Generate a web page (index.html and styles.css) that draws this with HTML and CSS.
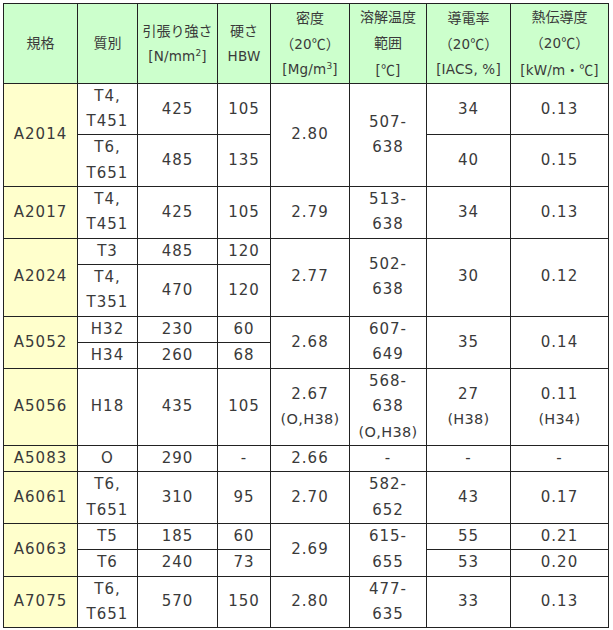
FILE: index.html
```html
<!DOCTYPE html>
<html lang="ja">
<head>
<meta charset="utf-8">
<title>アルミニウム合金の特性</title>
<link rel="stylesheet" href="styles.css">
</head>
<body>
<table class="spec">
  <colgroup>
    <col class="c1"><col class="c2"><col class="c3"><col class="c4">
    <col class="c5"><col class="c6"><col class="c7"><col class="c8">
  </colgroup>
  <thead>
    <tr>
      <th><span class="jp">規格</span></th>
      <th><span class="jp">質別</span></th>
      <th><span class="jp">引張り強さ</span><br>[N/mm<sup>2</sup>]</th>
      <th><span class="jp">硬さ</span><br>HBW</th>
      <th><span class="jp">密度</span><br><span class="jp">（</span>20<span class="jp">℃）</span><br>[Mg/m<sup>3</sup>]</th>
      <th><span class="jp">溶解温度</span><br><span class="jp">範囲</span><br>[<span class="jp">℃</span>]</th>
      <th><span class="jp">導電率</span><br><span class="jp">（</span>20<span class="jp">℃）</span><br>[IACS, %]</th>
      <th><span class="jp">熱伝導度</span><br><span class="jp">（</span>20<span class="jp">℃）</span><br>[kW/m<span class="jp">・℃</span>]</th>
    </tr>
  </thead>
  <tbody>
    <tr>
      <td class="grade" rowspan="2">A2014</td>
      <td>T4,<br>T451</td><td>425</td><td>105</td>
      <td rowspan="2">2.80</td><td rowspan="2">507-<br>638</td>
      <td>34</td><td>0.13</td>
    </tr>
    <tr>
      <td>T6,<br>T651</td><td>485</td><td>135</td>
      <td>40</td><td>0.15</td>
    </tr>
    <tr>
      <td class="grade">A2017</td>
      <td>T4,<br>T451</td><td>425</td><td>105</td>
      <td>2.79</td><td>513-<br>638</td><td>34</td><td>0.13</td>
    </tr>
    <tr>
      <td class="grade" rowspan="2">A2024</td>
      <td>T3</td><td>485</td><td>120</td>
      <td rowspan="2">2.77</td><td rowspan="2">502-<br>638</td>
      <td rowspan="2">30</td><td rowspan="2">0.12</td>
    </tr>
    <tr>
      <td>T4,<br>T351</td><td>470</td><td>120</td>
    </tr>
    <tr>
      <td class="grade" rowspan="2">A5052</td>
      <td>H32</td><td>230</td><td>60</td>
      <td rowspan="2">2.68</td><td rowspan="2">607-<br>649</td>
      <td rowspan="2">35</td><td rowspan="2">0.14</td>
    </tr>
    <tr>
      <td>H34</td><td>260</td><td>68</td>
    </tr>
    <tr>
      <td class="grade">A5056</td>
      <td>H18</td><td>435</td><td>105</td>
      <td>2.67<br><span class="note">(O,H38)</span></td>
      <td>568-<br>638<br><span class="note">(O,H38)</span></td>
      <td>27<br><span class="note">(H38)</span></td>
      <td>0.11<br><span class="note">(H34)</span></td>
    </tr>
    <tr>
      <td class="grade">A5083</td>
      <td>O</td><td>290</td><td>-</td>
      <td>2.66</td><td>-</td><td>-</td><td>-</td>
    </tr>
    <tr>
      <td class="grade">A6061</td>
      <td>T6,<br>T651</td><td>310</td><td>95</td>
      <td>2.70</td><td>582-<br>652</td><td>43</td><td>0.17</td>
    </tr>
    <tr>
      <td class="grade" rowspan="2">A6063</td>
      <td>T5</td><td>185</td><td>60</td>
      <td rowspan="2">2.69</td><td rowspan="2">615-<br>655</td>
      <td>55</td><td>0.21</td>
    </tr>
    <tr>
      <td>T6</td><td>240</td><td>73</td>
      <td>53</td><td>0.20</td>
    </tr>
    <tr>
      <td class="grade">A7075</td>
      <td>T6,<br>T651</td><td>570</td><td>150</td>
      <td>2.80</td><td>477-<br>635</td><td>33</td><td>0.13</td>
    </tr>
  </tbody>
</table>
</body>
</html>
```

FILE: styles.css
```css
html, body {
  margin: 0;
  padding: 0;
  background: #ffffff;
}

body {
  padding: 3px;
  font-family: "DejaVu Sans", "Noto Sans CJK JP", sans-serif;
  color: #3a3a3a;
}

.spec {
  border-collapse: collapse;
  table-layout: fixed;
  width: 606px;
  border: 1px solid #000000;
}

.c1 { width: 74px; }
.c2 { width: 60px; }
.c3 { width: 80px; }
.c4 { width: 53px; }
.c5 { width: 79px; }
.c6 { width: 77px; }
.c7 { width: 84px; }
.c8 { width: 98px; }

.spec th,
.spec td {
  border: 1px solid #222222;
  padding: 0;
  text-align: center;
  vertical-align: middle;
  line-height: 25.3px;
  white-space: nowrap;
}

.spec th {
  background: #ccffcc;
  font-weight: normal;
  font-size: 13.5px;
  letter-spacing: 0.2px;
}

.spec td {
  font-size: 15px;
  letter-spacing: 1px;
}

.spec td.grade {
  background: #ffffcc;
}

.jp {
  font-family: "Noto Sans CJK JP", sans-serif;
  font-size: 14px;
  letter-spacing: 0;
}

.spec sup {
  font-size: 9px;
  line-height: 0;
  vertical-align: 5px;
}

.note {
  font-size: 14.5px;
  letter-spacing: 0.3px;
}
```
